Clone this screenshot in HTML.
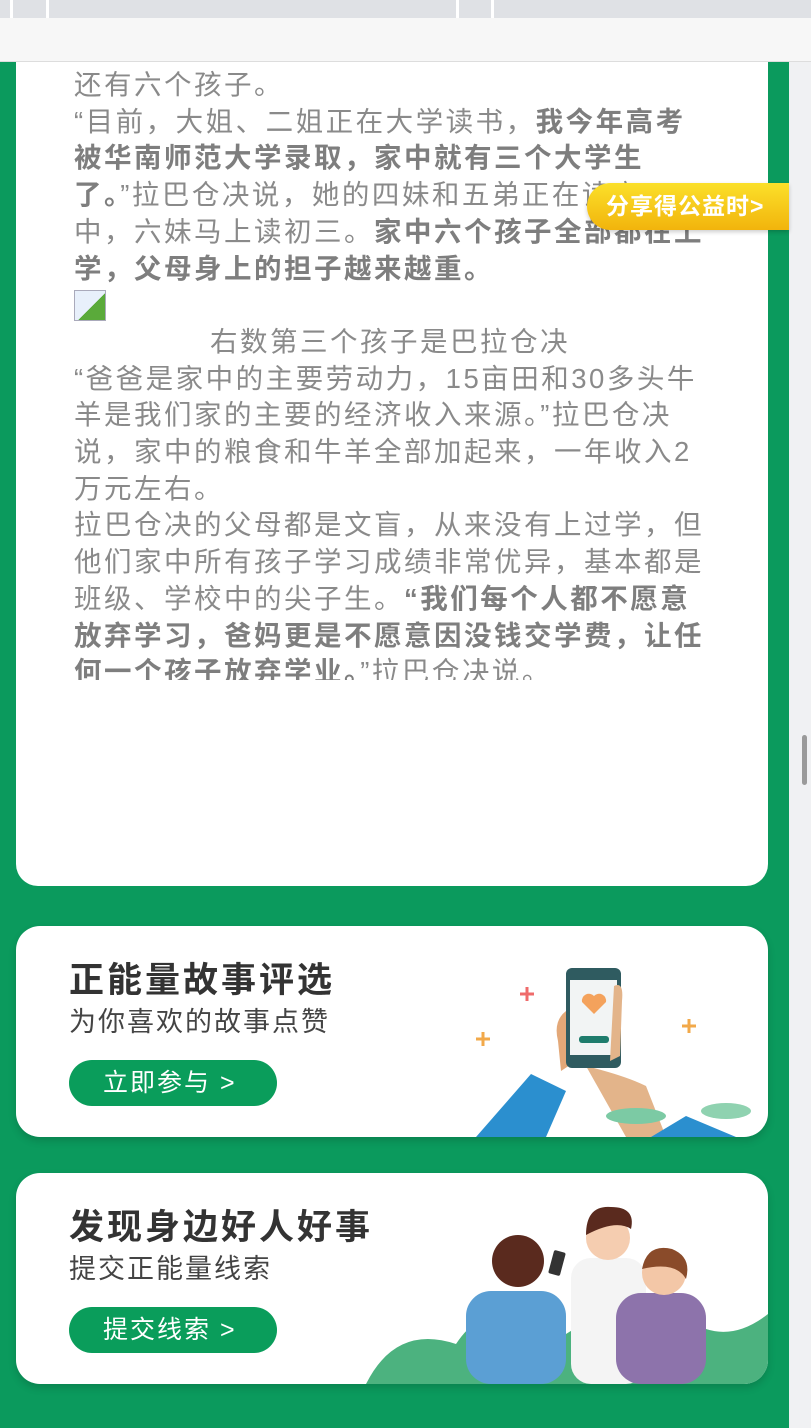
<!DOCTYPE html>
<html><head><meta charset="utf-8"><style>
*{margin:0;padding:0;box-sizing:border-box}
body{width:811px;height:1428px;overflow:hidden;background:#0b9a5d;font-family:"Liberation Sans","Noto Sans CJK SC",sans-serif;position:relative}
.top{position:absolute;left:0;top:0;width:811px;height:18px;background:#dfe1e5}
.top i{position:absolute;top:0;width:3px;height:18px;background:#fff}
.bar{position:absolute;left:0;top:18px;width:811px;height:44px;background:#f7f7f7;border-bottom:1px solid #ddd}
.side{position:absolute;left:789px;top:62px;width:22px;height:1366px;background:#f0f1f3}
.thumb{position:absolute;left:802px;top:735px;width:5px;height:50px;border-radius:3px;background:#9a9a9a}
.card{position:absolute;left:16px;top:62px;width:752px;height:824px;background:#fff;border-radius:0 0 22px 22px}
.txt{position:absolute;left:74px;top:67px;width:700px;height:613px;overflow:hidden;color:#8a8a8a;font-size:27.5px;line-height:36.7px;white-space:nowrap;letter-spacing:2.5px}
.txt b{color:#7e7e7e}
.img{display:inline-block;width:32px;height:31px;border:1px solid #aab;background:linear-gradient(135deg,#e8f0fb 55%,#5aaa3a 55%);vertical-align:top;margin-top:3px}
.share{position:absolute;left:587px;top:183px;width:202px;height:47px;border-radius:24px 0 0 24px;background:linear-gradient(#fbe02a,#f2b40c);color:#fff;font-size:23px;font-weight:bold;line-height:47px;padding-left:19px;letter-spacing:1px;box-shadow:0 2px 4px rgba(0,0,0,.2)}
.ban{position:absolute;left:16px;width:752px;height:211px;background:#fff;border-radius:24px;overflow:hidden;box-shadow:0 4px 8px rgba(0,0,0,.15)}
.ban h2{position:absolute;left:53px;top:26px;font-size:35px;color:#333;font-weight:bold;letter-spacing:3px}
.ban p{position:absolute;left:53px;top:74px;font-size:27px;color:#444;letter-spacing:2px}
.btn{position:absolute;left:53px;top:134px;width:208px;height:46px;border-radius:23px;background:#0a9d5b;color:#fff;font-size:25px;line-height:46px;padding-left:34px;letter-spacing:2px}
</style></head><body>
<div class="top"><i style="left:10px"></i><i style="left:46px"></i><i style="left:456px"></i><i style="left:491px"></i></div>
<div class="bar"></div>
<div class="side"></div><div class="thumb"></div>
<div class="card"></div>
<div class="txt">还有六个孩子。<br>“目前，大姐、二姐正在大学读书，<b>我今年高考</b><br><b>被华南师范大学录取，家中就有三个大学生</b><br><b>了。</b>”拉巴仓决说，她的四妹和五弟正在读高<br>中，六妹马上读初三。<b>家中六个孩子全部都在上</b><br><b>学，父母身上的担子越来越重。</b><br><span class="img"></span><br><span style="padding-left:136px">右数第三个孩子是巴拉仓决</span><br>“爸爸是家中的主要劳动力，15亩田和30多头牛<br>羊是我们家的主要的经济收入来源。”拉巴仓决<br>说，家中的粮食和牛羊全部加起来，一年收入2<br>万元左右。<br>拉巴仓决的父母都是文盲，从来没有上过学，但<br>他们家中所有孩子学习成绩非常优异，基本都是<br>班级、学校中的尖子生。<b>“我们每个人都不愿意</b><br><b>放弃学习，爸妈更是不愿意因没钱交学费，让任</b><br><b>何一个孩子放弃学业。</b>”拉巴仓决说。</div>
<div class="share">分享得公益时&gt;</div>
<div class="ban" style="top:926px">
<h2>正能量故事评选</h2><p>为你喜欢的故事点赞</p><div class="btn">立即参与 &gt;</div>
<svg style="position:absolute;left:420px;top:0" width="332" height="211">
<path d="M84 68h14M91 61v14" stroke="#ef6b6b" stroke-width="3"/>
<path d="M40 113h14M47 106v14" stroke="#f2a94a" stroke-width="3"/>
<path d="M246 100h14M253 93v14" stroke="#f2a94a" stroke-width="3"/>
<path d="M150 140 q40 10 60 20 l20 51 h-40z" fill="#e3b48a"/>
<path d="M40 211 L95 148 L130 165 L110 211z" fill="#2b8fcf"/>
<path d="M215 211 L250 190 L300 211z" fill="#2b8fcf"/>
<ellipse cx="200" cy="190" rx="30" ry="8" fill="#7ccaa4"/>
<ellipse cx="290" cy="185" rx="25" ry="8" fill="#8fd2b0"/>
<path d="M122 115 q-5 -20 8 -30 l10 50 -15 10z" fill="#e3a878"/>
<rect x="130" y="42" width="55" height="100" rx="6" fill="#2f5b60"/>
<rect x="134" y="54" width="47" height="75" fill="#f2f4f4"/>
<path d="M158 88 l-12 -12 a7 7 0 0 1 12 -6 a7 7 0 0 1 12 6z" fill="#f4a25c"/>
<rect x="143" y="110" width="30" height="7" rx="3" fill="#1f7c6c"/>
<path d="M178 60 q10 -5 8 15 l-2 55 -10 5z" fill="#e3b48a"/>
</svg>
</div>
<div class="ban" style="top:1173px">
<h2>发现身边好人好事</h2><p>提交正能量线索</p><div class="btn">提交线索 &gt;</div>
<svg style="position:absolute;left:330px;top:0" width="422" height="211">
<path d="M20 211 q30 -60 90 -40 q40 -60 110 -10 q60 -40 140 -5 q30 10 62 -15 v70z" fill="#4cb27f"/>
<rect x="225" y="85" width="75" height="126" rx="20" fill="#f4f4f4"/>
<circle cx="262" cy="65" r="22" fill="#f5cdb0"/>
<path d="M240 62 q0 -30 25 -28 q25 0 20 22 q-15 -10 -45 6z" fill="#5a2a1e"/>
<rect x="270" y="120" width="90" height="91" rx="25" fill="#8d73ab"/>
<circle cx="318" cy="100" r="22" fill="#f3c7a7"/>
<path d="M296 96 q5 -26 30 -20 q20 8 14 30 q-10 -18 -44 -10z" fill="#8a4b2a"/>
<rect x="120" y="118" width="100" height="93" rx="25" fill="#5b9fd4"/>
<circle cx="172" cy="88" r="26" fill="#5a2a1e"/>
<rect x="205" y="78" width="12" height="24" rx="2" fill="#333" transform="rotate(15 211 90)"/>
</svg>
</div>
</body></html>
